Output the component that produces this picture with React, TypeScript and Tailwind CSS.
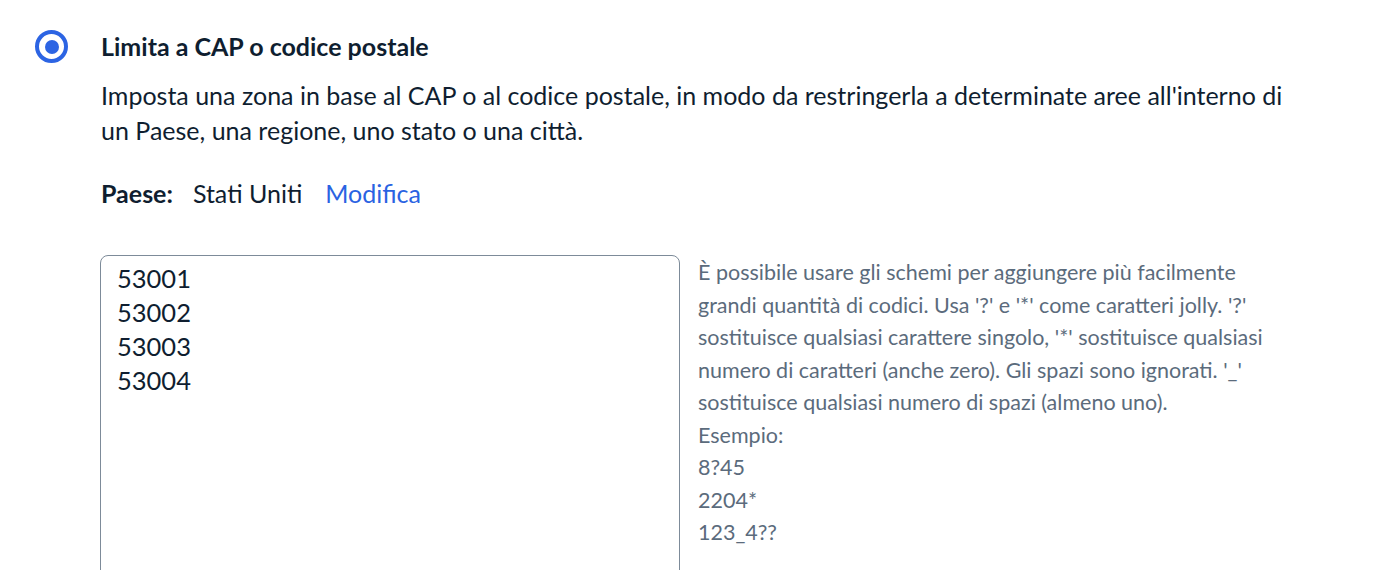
export default function App() {
  const codes = "53001\n53002\n53003\n53004"

  return (
    <main className="min-h-screen bg-white pl-[35px] pt-[30px] font-['Lato',sans-serif] text-[#0f1e30]">
      <div className="flex gap-[32px]">
        <div className="shrink-0">
          <span className="flex h-[33px] w-[33px] items-center justify-center rounded-full border-[4px] border-[#2c64e3] bg-white">
            <span className="h-[14px] w-[14px] rounded-full bg-[#2c64e3]" />
          </span>
        </div>
        <div className="flex-1 pr-[60px]">
          <h2 className="pl-[1px] pt-[2px] text-[25px] font-bold leading-[28px]">Limita a CAP o codice postale</h2>
          <p className="mt-[18px] pl-[1px] text-[25px] leading-[35px]">
            Imposta una zona in base al CAP o al codice postale, in modo da restringerla a determinate aree all'interno di un Paese, una regione, uno stato o una città.
          </p>
          <div className="mt-[30px] flex items-baseline pl-[1px] text-[25px] leading-[30px]">
            <span className="font-bold">Paese:</span>
            <span className="ml-[20px]">Stati Uniti</span>
            <a href="#" className="ml-[23px] text-[#2a63e2]">Modifica</a>
          </div>
          <div className="mt-[47px] flex gap-[18px]">
            <textarea
              defaultValue={codes}
              className="h-[340px] w-[580px] shrink-0 resize-none rounded-[8px] border border-[#7d8b99] px-[16px] py-[5px] text-[25.5px] leading-[34px] text-[#0f1e30] outline-none"
            />
            <div className="pt-[1px] text-[21.5px] leading-[32.5px] text-[#5b6b7c]">
              <p className="w-[580px]">
                È possibile usare gli schemi per aggiungere più facilmente grandi quantità di codici. Usa '?' e '*' come caratteri jolly. '?' sostituisce qualsiasi carattere singolo, '*' sostituisce qualsiasi numero di caratteri (anche zero). Gli spazi sono ignorati. '_' sostituisce qualsiasi numero di spazi (almeno uno).
              </p>
              <p>Esempio:</p>
              <p>8?45</p>
              <p>2204*</p>
              <p>123_4??</p>
            </div>
          </div>
        </div>
      </div>
    </main>
  )
}
